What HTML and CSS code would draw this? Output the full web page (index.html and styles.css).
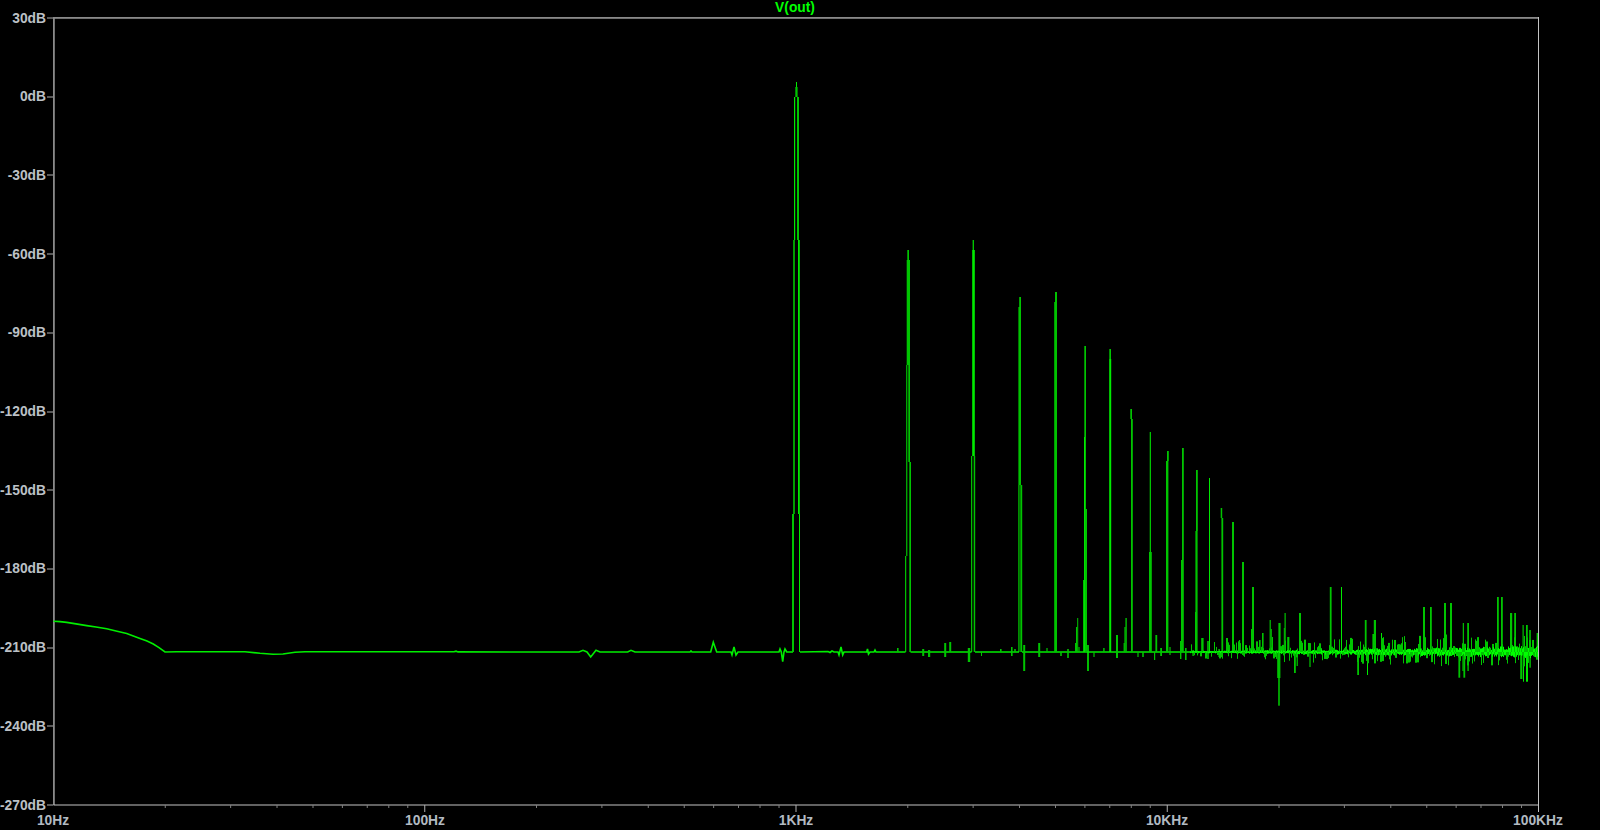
FILE: index.html
```html
<!DOCTYPE html>
<html lang="en">
<head>
<meta charset="utf-8">
<title>V(out)</title>
<link rel="stylesheet" href="styles.css">
</head>
<body>
<svg class="plot" id="plot" width="1600" height="830" viewBox="0 0 1600 830">
  <g id="grid"></g>
  <g id="trace"></g>
  <text class="title" x="795" y="12">V(out)</text>
  <g class="ylabels">
    <text x="46" y="23">30dB</text>
    <text x="46" y="101">0dB</text>
    <text x="46" y="180">-30dB</text>
    <text x="46" y="258.5">-60dB</text>
    <text x="46" y="337">-90dB</text>
    <text x="46" y="415.5">-120dB</text>
    <text x="46" y="495">-150dB</text>
    <text x="46" y="573">-180dB</text>
    <text x="46" y="652">-210dB</text>
    <text x="46" y="731">-240dB</text>
    <text x="46" y="810">-270dB</text>
  </g>
  <g class="xlabels">
    <text x="53" y="825">10Hz</text>
    <text x="425" y="825">100Hz</text>
    <text x="796" y="825">1KHz</text>
    <text x="1167" y="825">10KHz</text>
    <text x="1538" y="825">100KHz</text>
  </g>
</svg>
<script src="chart.js"></script>
</body>
</html>
```
FILE: styles.css
```css
html, body {
  margin: 0;
  height: 100%;
  background: #000;
  overflow: hidden;
}
.plot {
  display: block;
  font-family: "Liberation Sans", Arial, sans-serif;
  font-size: 13.8px;
  font-weight: 700;
}
.title {
  fill: #00ff00;
  text-anchor: middle;
}
.ylabels text {
  fill: #bcc1c6;
  text-anchor: end;
}
.xlabels text {
  fill: #b2bac2;
  text-anchor: middle;
}
.axis-dim { fill: #8a8a8a; }
.axis-light { fill: #c4c4c4; }
.tick { fill: #b0b0b0; }
.tick-minor { fill: #808080; }
.curve {
  fill: none;
  stroke: #00ee00;
  stroke-width: 1.6;
}
.dark { fill: #00c400; }
.bright { fill: #00ea00; }
.hot { fill: #00ff00; }
```
FILE: chart.js
```js
(function () {
  var NS = 'http://www.w3.org/2000/svg';
  var BASE = 652;
  var LEFT = 53.5, RIGHT = 1538.5, TOP = 18, BOTTOM = 805, DECADE = 371.25;

  function add(parent, tag, attrs) {
    var el = document.createElementNS(NS, tag);
    for (var k in attrs) el.setAttribute(k, attrs[k]);
    parent.appendChild(el);
    return el;
  }
  function box(parent, cls, x, y, w, h) {
    add(parent, 'rect', { 'class': cls, x: x, y: y, width: w, height: h });
  }

  /* axes */
  var grid = document.getElementById('grid');
  box(grid, 'axis-dim', LEFT - 0.5, TOP - 1, RIGHT - LEFT, 1.8);
  box(grid, 'axis-dim', LEFT - 0.5, TOP - 1, 1.8, BOTTOM - TOP + 1);
  box(grid, 'axis-light', LEFT, BOTTOM - 0.5, RIGHT - LEFT, 1);
  box(grid, 'axis-light', RIGHT - 0.5, TOP - 1, 1, BOTTOM - TOP + 8);
  for (var i = 0; i <= 10; i++) {
    box(grid, 'tick', 47, Math.round(TOP + i * 78.7) - 0.5, 6, 1);
  }
  for (var d = 0; d < 4; d++) {
    for (var m = 1; m < 10; m++) {
      var x = LEFT + (d + Math.log10(m)) * DECADE;
      if (m === 1) { if (d > 0) box(grid, 'tick', x - 0.5, BOTTOM, 1, 7); }
      else box(grid, 'tick-minor', x - 0.5, BOTTOM, 1, 3);
    }
  }

  /* low level curve, broken where the main peaks open up */
  var trace = document.getElementById('trace');
  var low = [
    [53.5,621.3],[60,621.6],[66.7,622.4],[76,623.9],[86.7,625.6],[96,627],[106.7,628.8],[116,631],[126.7,633.5],
    [134,636.2],[140,638.4],[147,641],[153.3,644],[159,647.6],
    [165,652],[176.7,651.7],[245,651.7],[260,653.3],[273,654.3],[283,654],[295,652.3],[305,651.7],
    [454,651.7],[456,651.2],[458,651.9],[579,652],[583,650.3],[587,652],[590.7,657],[596,650.3],
    [600,652],[627.7,652],[631,650.3],[635,652],[690,652],[691,651],[692,652],[710.7,652],
    [713.3,642.3],[716.7,652],[731,652],[732,655],[734,647],[736,655],[738,652],[779,652],
    [780,649],[781.3,652],[782.7,661.7],[784,652],[785,649],[786.7,652],[793,652]
  ];
  var low2 = [
    [800,652],[828,651.5],[830,652.5],[832,651],[834,652],[838,652],[839,655],[841,647],[842.7,655],
    [844,652],[866.7,652],[867.5,649],[868.5,654],[870,652],[874,652],[875,650],[876,652],[905.5,652]
  ];
  [low, low2, [[910.5,652],[971.5,652]], [[975,652],[1019,652]], [[1022,652],[1538,652]]].forEach(function (pts) {
    add(trace, 'polyline', { 'class': 'curve', points: pts.map(function (p) { return p.join(','); }).join(' ') });
  });

  /* [x0, x1, top, bottom, colour] */
  var D = 'dark', B = 'bright';
  var spikes = [
    /* 1 kHz */
    [796,797,82,87,B],[795.3,797.6,87,97,D],[794,795.2,97,240,B],[797,799,97,240,D],
    [793.2,794.8,240,514,D],[798,799.8,240,514,B],[792,794,514,652,D],[799,800,514,652,B],
    /* 2 kHz */
    [907.3,909,250,260,D],[906.7,910,260,365,D],[906.3,907.3,365,556,B],[908.3,910,365,462,D],
    [909.3,911,462,652,D],[905.2,906.2,556,652,B],
    /* 3 kHz */
    [972.6,974,240,250,D],[972.2,974.8,250,456,B],[971.2,972.2,456,652,B],[973.7,975.2,456,652,D],
    /* 4 kHz */
    [1019.2,1021,297,307,D],[1018.4,1021,307,485,D],[1018.4,1019.5,485,652,B],[1020.3,1022.2,485,652,D],
    /* 5 kHz */
    [1055,1057,292,302,D],[1054.2,1057,302,652,D],
    /* 6 kHz */
    [1084.3,1086,346,437,D],[1084,1085.8,437,652,B],[1084.8,1087,509,652,D],[1083.2,1084.2,580,652,B],
    /* 7 to 17 kHz */
    [1109.3,1111,349,359,D],[1109.2,1111.2,359,652,B],
    [1130.3,1132,409,419,D],[1131,1132.8,419,652,D],
    [1149.7,1151,432,552,D],[1149,1151.8,552,652,D],
    [1167,1168.8,451,461,D],[1166,1168.4,461,652,D],
    [1182,1183.8,448,652,D],[1181,1183,560,652,D],
    [1196,1197.8,470,531,D],[1195.4,1197.6,531,652,D],[1195,1196,612,652,D],
    [1209,1210,478,652,B],
    [1220.7,1222.2,508,518,D],[1221.4,1223.2,518,652,D],
    [1232,1234,522,652,D],
    [1242,1244,562,652,D],
    [1252,1254,587,652,D],
    /* small lines above the floor, below 17 kHz */
    [897,898.6,648,652,D],[922.2,924.2,649,656,D],[928,930.2,650,657,D],[944.2,946.2,643,657,D],
    [949.2,951.2,642,652,D],[967.8,970.2,648,662,D],[981,982,652,656,D],[1000,1001.6,649,652,D],
    [1011,1012.6,647,656,D],[1014.2,1015.8,649,652,D],[1023.2,1025.2,645,671,D],[1038.2,1040.2,643,657,D],
    [1046.4,1047.6,648,652,D],[1060.2,1061.8,652,656,D],[1067.2,1068.8,649,658,D],[1075,1076,643,652,D],
    [1076,1077.2,627,652,D],[1077.2,1078.2,618,652,D],[1078.4,1079.6,647,652,D],[1087.2,1088.8,645,671,B],
    [1093.4,1094.6,652,657,D],[1103.2,1104.6,648,652,D],[1116,1118,635,658,D],[1123.6,1124.8,643,652,D],
    [1124.4,1125.6,627,652,D],[1125.4,1126.8,618,652,D],[1137.4,1138.6,652,657,D],[1142.2,1143.8,652,657,D],
    [1154,1155.2,652,660,D],[1155.4,1157.2,635,652,D],[1160.2,1162,648,656,D],[1169.4,1170.6,647,655,D],
    [1180,1181.4,641,659,D],[1185,1186.6,648,660,D],[1192.4,1193.8,650,656,D],[1201.2,1203.6,638,652,D],
    [1207.2,1208.8,641,659,D],[1218.4,1219.8,649,657,D],[1226,1228,638,652,D],[1239,1240.2,640,652,D],
    /* 17 kHz to 100 kHz, lines above the band */
    [1251,1252.2,629,652,D],[1259,1260.6,640,652,D],[1262,1263.6,633,652,D],[1269.6,1270.8,620,652,D],
    [1270.8,1271.8,629,652,D],[1272,1273,637,652,D],[1278.4,1280.6,623,652,D],[1284.6,1285.6,613,652,B],
    [1283.8,1284.8,628,652,D],[1287.2,1289.4,637,652,D],[1299,1301,613,652,D],[1329.8,1331.6,587,652,D],
    [1341,1342,587,652,B],[1364.8,1366.6,620,652,D],[1373.8,1376,620,652,D],[1372.4,1374.2,634,652,D],
    [1381,1382,633,652,B],[1423,1425,607,652,D],[1430,1431.8,607,652,D],[1444,1446,603,652,D],
    [1450,1452,603,652,D],[1462.8,1463.8,623,652,B],[1467.2,1469,623,652,D],[1497,1498.8,597,652,D],
    [1501,1502.8,597,652,D],[1510,1512.2,613,652,D],[1514.2,1516,613,652,D],[1522.6,1523.6,625,652,B],
    [1526,1527.8,625,652,D],[1529.2,1530.8,630,652,D],[1536.6,1538,633,652,D],
    /* lines below the band */
    [1277.2,1280.4,652,678,D],[1278.2,1279.8,678,705.7,D],[1294,1295.8,652,673,D],[1296.6,1297.8,652,666,D],
    [1309.4,1310.6,652,667,D],[1357.2,1359,652,675,D],[1367,1368,652,675,B],[1458.4,1460.2,652,677.7,D],
    [1463.4,1465.2,652,677.7,D],[1462.4,1463.6,652,671,D],[1467.4,1468.8,652,671,D],[1520.2,1522.4,652,679,D],
    [1523,1524,652,681.7,B],[1526,1528,652,681.7,B],[1529.4,1530.8,652,667.7,D]
  ];
  spikes.forEach(function (s) {
    box(trace, s[4], s[0], s[2], s[1] - s[0], s[3] - s[2]);
  });

  /* the numerical noise floor thickens toward 100 kHz */
  var seed = 73;
  function rnd() {
    seed = (seed * 1664525 + 1013904223) % 4294967296;
    return seed / 4294967296;
  }
  for (var nx = 1190; nx < RIGHT - 1; nx += 1) {
    var t = (nx - 1190) / (RIGHT - 1190);
    var core = 1 + 4.2 * Math.pow(t, 1.3);
    var up = core * (0.45 + 0.75 * rnd());
    var dn = core * (0.45 + 0.75 * rnd());
    box(trace, 'hot', nx, BASE - up, 1, up + dn);
    if (rnd() < 0.42 + 0.5 * t) {
      var reach = 3 + (5 + 10 * t) * Math.pow(rnd(), 1.5);
      var downward = rnd() < 0.45;
      var hgt = downward ? reach * 0.95 : reach * 1.15;
      box(trace, 'dark', nx, downward ? BASE : BASE - hgt, rnd() < 0.4 ? 2 : 1, hgt);
    }
  }
})();
```
